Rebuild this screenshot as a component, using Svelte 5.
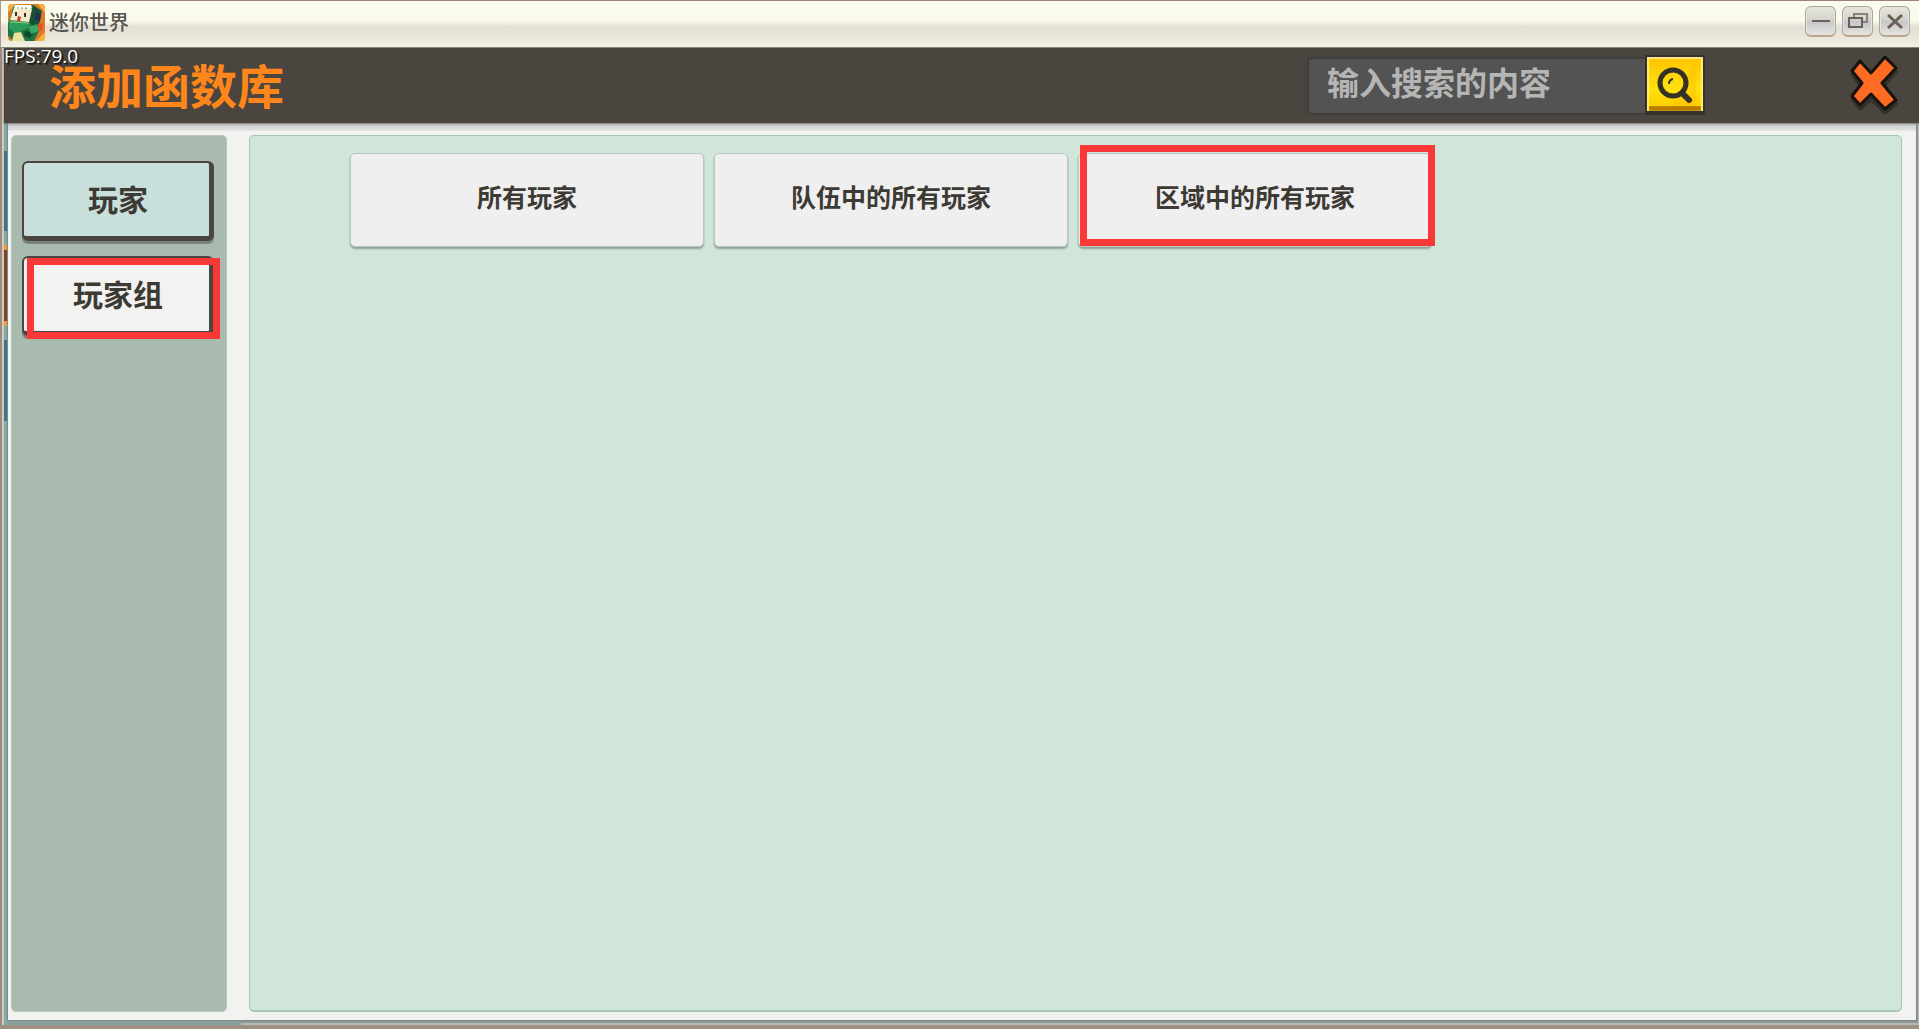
<script lang="ts">
  type Item = { id: string; label: string; marked?: boolean };

  const categories: Item[] = [
    { id: "player", label: "玩家" },
    { id: "group", label: "玩家组", marked: true },
  ];

  const functions: Item[] = [
    { id: "all", label: "所有玩家" },
    { id: "team", label: "队伍中的所有玩家" },
    { id: "area", label: "区域中的所有玩家", marked: true },
  ];

  let active = $state("player");
  let query = $state("");
</script>

<div class="window">
  <header class="titlebar">
    <svg class="app-icon" viewBox="0 0 37 37" aria-hidden="true">
      <defs>
        <clipPath id="icon-clip"><rect width="37" height="37" rx="4" /></clipPath>
      </defs>
      <g clip-path="url(#icon-clip)">
        <rect width="37" height="37" fill="#e07a24" />
        <path d="M0 8L8 0H0zM30 0l7 9V0zM28 37l9-9v9z" fill="#f4b341" />
        <path d="M0 18l10 5 17-5 5 7-6 12H5L0 31z" fill="#1d7544" />
        <path d="M6 1h20l-3 17-22-1z" fill="#238b50" />
        <path d="M25 1l9 6-4 17-9-5z" fill="#155238" />
        <path d="M6 4l18 1-3 13L2 16z" fill="#f5e8c8" />
        <path d="M6 3l2 3 2-3 2 3 2-3 2 3 2-3 2 3 4-2-1-3H7z" fill="#fff" />
        <path d="M1 17l20 1 1 5-15 7-6-6z" fill="#2d9b58" />
        <path d="M2 18l19 1" stroke="#8ccf8a" stroke-width="1" />
        <rect x="7" y="8" width="2" height="4" fill="#333" />
        <rect x="16" y="9" width="2" height="4" fill="#333" />
        <path d="M10 12l3 1-1 4h-3z" fill="#bd3d2d" />
        <path d="M28 8l5 2-1 8-5-3z" fill="#28314c" />
        <path d="M6 29l7-1 4 9H4z" fill="#e7e2a0" />
        <path d="M17 27l9 2-4 5-6-2z" fill="#0f4a31" />
        <path d="M21 23l8-3 2 7-8 3z" fill="#39aa62" />
        <path d="M30 20l5-1-1 8-4-1z" fill="#e5522c" />
      </g>
    </svg>
    <span class="app-name">迷你世界</span>
    <div class="controls">
      <button aria-label="Minimize">
        <svg viewBox="0 0 24 24"><path d="M3 12h18" stroke-width="2" /></svg>
      </button>
      <button aria-label="Restore">
        <svg viewBox="0 0 24 24">
          <path d="M8 9V5h13v8h-4" stroke-width="2" opacity=".7" />
          <path d="M3 9h13v9H3z" stroke-width="2" />
        </svg>
      </button>
      <button aria-label="Close window">
        <svg viewBox="0 0 24 24"><path d="M5 6l14 13M19 6L5 19" stroke-width="3" /></svg>
      </button>
    </div>
  </header>

  <div class="toolbar">
    <span class="fps">FPS:79.0</span>
    <h1>添加函数库</h1>
    <form class="search" onsubmit={(e) => e.preventDefault()}>
      <input type="text" aria-label="输入搜索的内容" placeholder="输入搜索的内容" bind:value={query} />
      <button aria-label="Search">
        <svg viewBox="0 0 56 54">
          <path d="M24 49L49 5v44z" fill="#ffbd00" opacity=".4" />
          <circle cx="26" cy="26" r="13" fill="none" stroke="#353126" stroke-width="5" />
          <path d="M35 36l7 7" fill="none" stroke="#353126" stroke-width="6" stroke-linecap="round" />
          <path d="M22 27q0-4 4-5" fill="none" stroke="#353126" stroke-width="2" />
        </svg>
      </button>
    </form>
    <button class="close" aria-label="Close">
      <svg viewBox="0 0 48 60">
        <path
          d="M9 9L21 20 35 5 46 17 33 32 46 49 35 58 21 45 10 54 2 44 11 32 2 19z"
          fill="#25231f"
          stroke="#25231f"
          stroke-width="3"
          stroke-linejoin="round"
          opacity=".6"
        />
        <path
          d="M10 6L21 18 35 2 46 13 32 28 46 45 35 54 21 39 10 50 2 41 12 28 2 16z"
          fill="#ff6b23"
          stroke="#17130f"
          stroke-width="3"
          stroke-linejoin="round"
        />
      </svg>
    </button>
  </div>

  <div class="backdrop">
    <main>
      <nav>
        {#each categories as item (item.id)}
          <button
            class="category"
            class:active={active === item.id}
            class:marked={item.marked}
            onclick={() => (active = item.id)}
          >{item.label}</button>
        {/each}
      </nav>
      <section class="functions">
        {#each functions as item (item.id)}
          <button class="card" class:marked={item.marked}>{item.label}</button>
        {/each}
      </section>
    </main>
  </div>
</div>

<style>
  :global(body) {
    background: #9c8c82;
  }

  .window,
  .window * {
    box-sizing: border-box;
  }

  .window {
    min-height: 100vh;
    display: flex;
    flex-direction: column;
    border-top: 1px solid #9f8379;
    border-bottom: 4px solid #9f9084;
    background: linear-gradient(to right, #9c8c82 2px, #d4cabb 2px);
    font-family: "Noto Sans CJK SC", sans-serif;
  }

  button,
  input {
    font: inherit;
    padding: 0;
    border: 0;
  }

  button {
    cursor: pointer;
  }

  svg {
    display: block;
  }

  .titlebar {
    height: 47px;
    display: flex;
    align-items: flex-start;
    padding: 3px 9px 0 7px;
    border-left: 1px solid #aa9b90;
    border-bottom: 1px solid #8b8b79;
    background: linear-gradient(#fafbec 0, #fafbec 42%, #e5e0d5 56%, #e8e4d8 75%, #f3f2e5 100%);
  }

  .app-icon {
    width: 37px;
    height: 37px;
  }

  .app-name {
    margin-left: 4px;
    font-size: 20px;
    line-height: 36px;
    font-weight: 500;
    color: #57544f;
  }

  .controls {
    margin-left: auto;
    display: flex;
    gap: 6px;
    padding-top: 2px;
  }

  .controls button {
    width: 31px;
    height: 31px;
    display: grid;
    place-items: center;
    border: 1px solid #aaa79e;
    border-bottom: 2px solid #b9a490;
    border-radius: 6px;
    background: linear-gradient(#e8e7dc, #d5d4ce 42%, #c6c7ca 55%, #e6e5dd);
    box-shadow: inset 0 0 0 1px #e6e4db;
  }

  .controls svg {
    width: 24px;
    height: 24px;
    fill: none;
    stroke: #6b6056;
  }

  .toolbar {
    position: relative;
    z-index: 1;
    height: 75px;
    display: flex;
    align-items: flex-start;
    margin-left: 4px;
    padding: 7px 21px 0 45px;
    background: #4a463f;
    box-shadow: 0 1px 2px #77746f;
  }

  .fps {
    position: absolute;
    left: 0;
    top: 0;
    font-family: "Open Sans", sans-serif;
    font-size: 19px;
    line-height: 17px;
    font-weight: 500;
    color: #fff;
    text-shadow: 1px 1px 1px #111, 2px 2px 1px #222;
  }

  h1 {
    margin: 10px 0 0;
    font-size: 47px;
    line-height: 38px;
    font-weight: 700;
    color: #ff861b;
  }

  .search {
    display: flex;
    margin-left: auto;
    margin-right: 145px;
  }

  .search input {
    width: 338px;
    height: 58px;
    margin-top: 2px;
    padding: 0 18px 10px;
    border: 2px solid #403e3a;
    border-right: 0;
    border-radius: 4px 0 0 4px;
    background: #535353;
    color: #bbb;
    font-size: 32px;
    font-weight: 700;
    line-height: 44px;
    outline: none;
  }

  .search input::placeholder {
    color: #b5b5b5;
    opacity: 1;
  }

  .search button {
    width: 60px;
    height: 60px;
    border: 2px solid #35322e;
    border-bottom-width: 4px;
    background: linear-gradient(#ffc400, #ffe10d 60%, #ffcf00 90%, #b87b00 92%);
    box-shadow: inset 0 2px 1px #ffe28a, inset -2px 0 1px #fff16e, inset 2px 0 1px #fff16e;
  }

  .close {
    width: 48px;
    height: 60px;
    background: none;
  }

  /* The scene behind the dialog shows through along its left and bottom edges. */
  .backdrop {
    flex: 1;
    display: flex;
    margin-left: 4px;
    padding: 0 3px 5px 4px;
    background:
      linear-gradient(
          #7fa9a9 28px,
          #38768a 28px,
          #38768a 108px,
          #7fa9a9 108px,
          #7fa9a9 122px,
          #ff932f 122px,
          #ff932f 127px,
          #7b4426 127px,
          #7b4426 198px,
          #ff932f 198px,
          #ff932f 203px,
          #7fa9a9 203px,
          #7fa9a9 217px,
          #38768a 217px,
          #38768a 298px,
          #7fa9a9 298px
        )
        left top / 4px 100% no-repeat,
      linear-gradient(#7fa2a2, #7fa2a2) left bottom / 237px 5px no-repeat,
      #b5bcb7;
  }

  main {
    flex: 1;
    display: flex;
    gap: 22px;
    padding: 12px 14px 8px 3px;
    background: linear-gradient(#cfcfcd 0, #dddddb 7px, #f2f2f0 8px);
    box-shadow: 0 0 0 1px #788c8c, 1px 2px 0 1px #929a96;
  }

  nav {
    width: 216px;
    display: flex;
    flex-direction: column;
    gap: 15px;
    padding: 25px 12px 26px 10px;
    border: 1px solid #b8c6bb;
    border-radius: 5px;
    background: #a9baae;
  }

  .category,
  .card {
    position: relative;
    color: #3d3a34;
    font-weight: 700;
  }

  .category {
    height: 80px;
    padding: 0 0 4px 3px;
    border: 2px solid #4a463f;
    border-right-width: 5px;
    border-bottom-width: 5px;
    border-radius: 6px;
    background: #f2f2f0;
    box-shadow: 0 3px 0 #78827a;
    font-size: 30px;
    line-height: 40px;
  }

  .category.active {
    background: #c9dfdc;
  }

  .functions {
    flex: 1;
    display: flex;
    align-items: flex-start;
    gap: 10px;
    padding: 17px 100px;
    border: 1px solid #a6c8b3;
    border-bottom-width: 2px;
    border-radius: 5px;
    background: #d1e6da;
  }

  .card {
    flex: 0 1 354px;
    height: 94px;
    padding-bottom: 8px;
    border: 1px solid #b9c7bd;
    border-radius: 5px;
    background: #efefef;
    box-shadow: 0 2px 2px #8fa096;
    font-size: 25px;
    line-height: 36px;
  }

  .marked::after {
    content: "";
    position: absolute;
    border: 7px solid #fb3838;
  }

  .category.marked::after {
    inset: 0 -11px -8px 3px;
  }

  .card.marked::after {
    inset: -9px -4px 0 1px;
  }
</style>
